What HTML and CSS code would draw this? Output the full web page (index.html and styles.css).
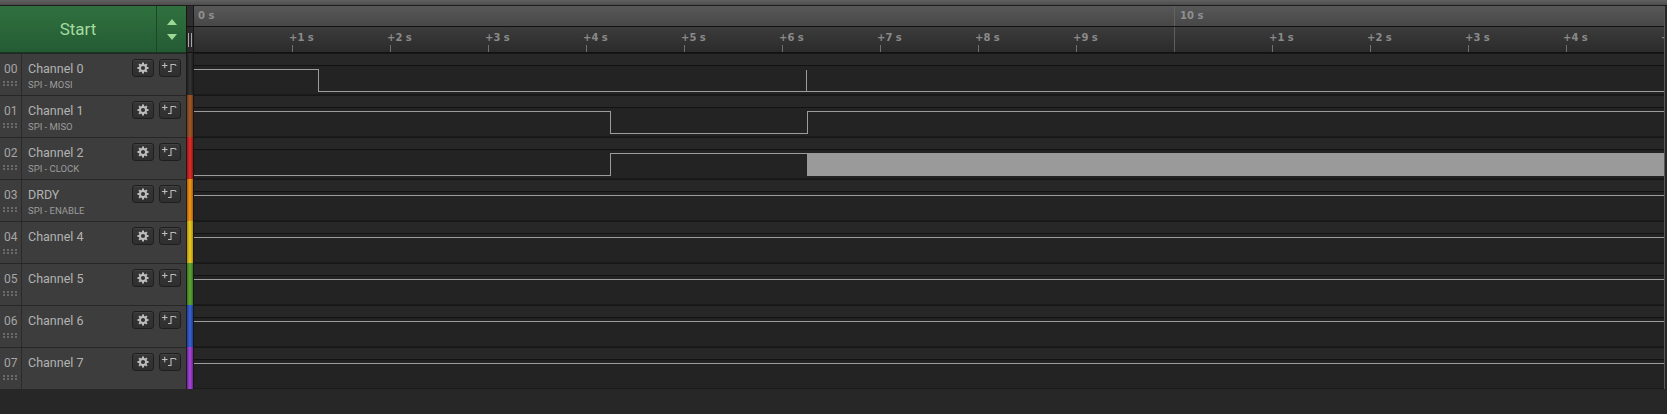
FILE: index.html
```html
<!DOCTYPE html>
<html>
<head>
<meta charset="utf-8">
<link rel="stylesheet" href="styles.css">
</head>
<body>
<div class="app">
  <div class="topband"></div>
  <div class="header">
    <div class="start">
      <div class="start-label">Start</div>
      <div class="arrows"><span class="tri-up"></span><span class="tri-down"></span></div>
    </div>
    <div class="hgutter"><div class="hg1"></div><div class="hg2"><span class="grip2"></span></div></div>
    <div class="ruler">
      <div class="ruler-top"><div class="seg-a">0 s</div><div class="seg-b">10 s</div></div>
      <div class="ruler-ticks">
        <div class="cell"></div>
        <div class="cell"><span class="lbl">+1 s</span><span class="tick"></span></div>
        <div class="cell"><span class="lbl">+2 s</span><span class="tick"></span></div>
        <div class="cell"><span class="lbl">+3 s</span><span class="tick"></span></div>
        <div class="cell"><span class="lbl">+4 s</span><span class="tick"></span></div>
        <div class="cell"><span class="lbl">+5 s</span><span class="tick"></span></div>
        <div class="cell"><span class="lbl">+6 s</span><span class="tick"></span></div>
        <div class="cell"><span class="lbl">+7 s</span><span class="tick"></span></div>
        <div class="cell"><span class="lbl">+8 s</span><span class="tick"></span></div>
        <div class="cell"><span class="lbl">+9 s</span><span class="tick"></span></div>
        <div class="cell major"></div>
        <div class="cell"><span class="lbl">+1 s</span><span class="tick"></span></div>
        <div class="cell"><span class="lbl">+2 s</span><span class="tick"></span></div>
        <div class="cell"><span class="lbl">+3 s</span><span class="tick"></span></div>
        <div class="cell"><span class="lbl">+4 s</span><span class="tick"></span></div>
        <div class="cell"><span class="lbl">+5 s</span><span class="tick"></span></div>
      </div>
    </div>
    <div class="edge"></div>
  </div>

  <div class="channel">
    <div class="label">
      <div class="num"><span class="idx">00</span><svg class="grip" width="16" height="5" viewBox="0 0 16 5"><g fill="#6a6a6a"><rect x="0" y="0" width="2" height="2"/><rect x="4" y="0" width="2" height="2"/><rect x="8" y="0" width="2" height="2"/><rect x="12" y="0" width="2" height="2"/><rect x="0" y="3" width="2" height="2"/><rect x="4" y="3" width="2" height="2"/><rect x="8" y="3" width="2" height="2"/><rect x="12" y="3" width="2" height="2"/></g></svg></div>
      <div class="info">
        <div class="name-row"><span class="name">Channel 0</span>
          <span class="btn"><svg width="12" height="12" viewBox="0 0 12 12"><g fill="#bdbdbd"><circle cx="6" cy="6" r="4"/><rect x="5" y="0.5" width="2" height="11"/><rect x="5" y="0.5" width="2" height="11" transform="rotate(45 6 6)"/><rect x="5" y="0.5" width="2" height="11" transform="rotate(90 6 6)"/><rect x="5" y="0.5" width="2" height="11" transform="rotate(135 6 6)"/></g><circle cx="6" cy="6" r="2.1" fill="#333"/></svg></span>
          <span class="btn"><svg width="20" height="16" viewBox="0 0 20 16"><path d="M2 5.5H7.5M4.75 2.75V8.25M8 11.5H11V4.5H14.5Q16 4.5 16 6" fill="none" stroke="#bdbdbd" stroke-width="1.1"/></svg></span>
        </div>
        <div class="sub">SPI - MOSI</div>
      </div>
    </div>
    <div class="gutter c0"></div>
    <div class="track"><div class="strip"></div><div class="signal"><svg width="1470" height="28" viewBox="0 0 1470 28" shape-rendering="crispEdges"><path d="M0 3.5H124.5V25.5H1470M612.5 3.5V25.5" fill="none" stroke="#9c9c9c" stroke-width="1"/></svg></div></div>
    <div class="edge"></div>
  </div>

  <div class="channel">
    <div class="label">
      <div class="num"><span class="idx">01</span><svg class="grip" width="16" height="5" viewBox="0 0 16 5"><g fill="#6a6a6a"><rect x="0" y="0" width="2" height="2"/><rect x="4" y="0" width="2" height="2"/><rect x="8" y="0" width="2" height="2"/><rect x="12" y="0" width="2" height="2"/><rect x="0" y="3" width="2" height="2"/><rect x="4" y="3" width="2" height="2"/><rect x="8" y="3" width="2" height="2"/><rect x="12" y="3" width="2" height="2"/></g></svg></div>
      <div class="info">
        <div class="name-row"><span class="name">Channel 1</span>
          <span class="btn"><svg width="12" height="12" viewBox="0 0 12 12"><g fill="#bdbdbd"><circle cx="6" cy="6" r="4"/><rect x="5" y="0.5" width="2" height="11"/><rect x="5" y="0.5" width="2" height="11" transform="rotate(45 6 6)"/><rect x="5" y="0.5" width="2" height="11" transform="rotate(90 6 6)"/><rect x="5" y="0.5" width="2" height="11" transform="rotate(135 6 6)"/></g><circle cx="6" cy="6" r="2.1" fill="#333"/></svg></span>
          <span class="btn"><svg width="20" height="16" viewBox="0 0 20 16"><path d="M2 5.5H7.5M4.75 2.75V8.25M8 11.5H11V4.5H14.5Q16 4.5 16 6" fill="none" stroke="#bdbdbd" stroke-width="1.1"/></svg></span>
        </div>
        <div class="sub">SPI - MISO</div>
      </div>
    </div>
    <div class="gutter c1"></div>
    <div class="track"><div class="strip"></div><div class="signal"><svg width="1470" height="28" viewBox="0 0 1470 28" shape-rendering="crispEdges"><path d="M0 3.5H416.5V25.5H613.5V3.5H1470" fill="none" stroke="#9c9c9c" stroke-width="1"/></svg></div></div>
    <div class="edge"></div>
  </div>

  <div class="channel">
    <div class="label">
      <div class="num"><span class="idx">02</span><svg class="grip" width="16" height="5" viewBox="0 0 16 5"><g fill="#6a6a6a"><rect x="0" y="0" width="2" height="2"/><rect x="4" y="0" width="2" height="2"/><rect x="8" y="0" width="2" height="2"/><rect x="12" y="0" width="2" height="2"/><rect x="0" y="3" width="2" height="2"/><rect x="4" y="3" width="2" height="2"/><rect x="8" y="3" width="2" height="2"/><rect x="12" y="3" width="2" height="2"/></g></svg></div>
      <div class="info">
        <div class="name-row"><span class="name">Channel 2</span>
          <span class="btn"><svg width="12" height="12" viewBox="0 0 12 12"><g fill="#bdbdbd"><circle cx="6" cy="6" r="4"/><rect x="5" y="0.5" width="2" height="11"/><rect x="5" y="0.5" width="2" height="11" transform="rotate(45 6 6)"/><rect x="5" y="0.5" width="2" height="11" transform="rotate(90 6 6)"/><rect x="5" y="0.5" width="2" height="11" transform="rotate(135 6 6)"/></g><circle cx="6" cy="6" r="2.1" fill="#333"/></svg></span>
          <span class="btn"><svg width="20" height="16" viewBox="0 0 20 16"><path d="M2 5.5H7.5M4.75 2.75V8.25M8 11.5H11V4.5H14.5Q16 4.5 16 6" fill="none" stroke="#bdbdbd" stroke-width="1.1"/></svg></span>
        </div>
        <div class="sub">SPI - CLOCK</div>
      </div>
    </div>
    <div class="gutter c2"></div>
    <div class="track"><div class="strip"></div><div class="signal"><svg width="1470" height="28" viewBox="0 0 1470 28" shape-rendering="crispEdges"><rect x="613" y="3" width="857" height="23" fill="#9a9a9a"/><path d="M0 25.5H416.5V3.5H613.5" fill="none" stroke="#9c9c9c" stroke-width="1"/></svg></div></div>
    <div class="edge"></div>
  </div>

  <div class="channel">
    <div class="label">
      <div class="num"><span class="idx">03</span><svg class="grip" width="16" height="5" viewBox="0 0 16 5"><g fill="#6a6a6a"><rect x="0" y="0" width="2" height="2"/><rect x="4" y="0" width="2" height="2"/><rect x="8" y="0" width="2" height="2"/><rect x="12" y="0" width="2" height="2"/><rect x="0" y="3" width="2" height="2"/><rect x="4" y="3" width="2" height="2"/><rect x="8" y="3" width="2" height="2"/><rect x="12" y="3" width="2" height="2"/></g></svg></div>
      <div class="info">
        <div class="name-row"><span class="name">DRDY</span>
          <span class="btn"><svg width="12" height="12" viewBox="0 0 12 12"><g fill="#bdbdbd"><circle cx="6" cy="6" r="4"/><rect x="5" y="0.5" width="2" height="11"/><rect x="5" y="0.5" width="2" height="11" transform="rotate(45 6 6)"/><rect x="5" y="0.5" width="2" height="11" transform="rotate(90 6 6)"/><rect x="5" y="0.5" width="2" height="11" transform="rotate(135 6 6)"/></g><circle cx="6" cy="6" r="2.1" fill="#333"/></svg></span>
          <span class="btn"><svg width="20" height="16" viewBox="0 0 20 16"><path d="M2 5.5H7.5M4.75 2.75V8.25M8 11.5H11V4.5H14.5Q16 4.5 16 6" fill="none" stroke="#bdbdbd" stroke-width="1.1"/></svg></span>
        </div>
        <div class="sub">SPI - ENABLE</div>
      </div>
    </div>
    <div class="gutter c3"></div>
    <div class="track"><div class="strip"></div><div class="signal"><svg width="1470" height="28" viewBox="0 0 1470 28" shape-rendering="crispEdges"><path d="M0 3.5H1470" fill="none" stroke="#9c9c9c" stroke-width="1"/></svg></div></div>
    <div class="edge"></div>
  </div>

  <div class="channel">
    <div class="label">
      <div class="num"><span class="idx">04</span><svg class="grip" width="16" height="5" viewBox="0 0 16 5"><g fill="#6a6a6a"><rect x="0" y="0" width="2" height="2"/><rect x="4" y="0" width="2" height="2"/><rect x="8" y="0" width="2" height="2"/><rect x="12" y="0" width="2" height="2"/><rect x="0" y="3" width="2" height="2"/><rect x="4" y="3" width="2" height="2"/><rect x="8" y="3" width="2" height="2"/><rect x="12" y="3" width="2" height="2"/></g></svg></div>
      <div class="info">
        <div class="name-row"><span class="name">Channel 4</span>
          <span class="btn"><svg width="12" height="12" viewBox="0 0 12 12"><g fill="#bdbdbd"><circle cx="6" cy="6" r="4"/><rect x="5" y="0.5" width="2" height="11"/><rect x="5" y="0.5" width="2" height="11" transform="rotate(45 6 6)"/><rect x="5" y="0.5" width="2" height="11" transform="rotate(90 6 6)"/><rect x="5" y="0.5" width="2" height="11" transform="rotate(135 6 6)"/></g><circle cx="6" cy="6" r="2.1" fill="#333"/></svg></span>
          <span class="btn"><svg width="20" height="16" viewBox="0 0 20 16"><path d="M2 5.5H7.5M4.75 2.75V8.25M8 11.5H11V4.5H14.5Q16 4.5 16 6" fill="none" stroke="#bdbdbd" stroke-width="1.1"/></svg></span>
        </div>
        <div class="sub"></div>
      </div>
    </div>
    <div class="gutter c4"></div>
    <div class="track"><div class="strip"></div><div class="signal"><svg width="1470" height="28" viewBox="0 0 1470 28" shape-rendering="crispEdges"><path d="M0 3.5H1470" fill="none" stroke="#9c9c9c" stroke-width="1"/></svg></div></div>
    <div class="edge"></div>
  </div>

  <div class="channel">
    <div class="label">
      <div class="num"><span class="idx">05</span><svg class="grip" width="16" height="5" viewBox="0 0 16 5"><g fill="#6a6a6a"><rect x="0" y="0" width="2" height="2"/><rect x="4" y="0" width="2" height="2"/><rect x="8" y="0" width="2" height="2"/><rect x="12" y="0" width="2" height="2"/><rect x="0" y="3" width="2" height="2"/><rect x="4" y="3" width="2" height="2"/><rect x="8" y="3" width="2" height="2"/><rect x="12" y="3" width="2" height="2"/></g></svg></div>
      <div class="info">
        <div class="name-row"><span class="name">Channel 5</span>
          <span class="btn"><svg width="12" height="12" viewBox="0 0 12 12"><g fill="#bdbdbd"><circle cx="6" cy="6" r="4"/><rect x="5" y="0.5" width="2" height="11"/><rect x="5" y="0.5" width="2" height="11" transform="rotate(45 6 6)"/><rect x="5" y="0.5" width="2" height="11" transform="rotate(90 6 6)"/><rect x="5" y="0.5" width="2" height="11" transform="rotate(135 6 6)"/></g><circle cx="6" cy="6" r="2.1" fill="#333"/></svg></span>
          <span class="btn"><svg width="20" height="16" viewBox="0 0 20 16"><path d="M2 5.5H7.5M4.75 2.75V8.25M8 11.5H11V4.5H14.5Q16 4.5 16 6" fill="none" stroke="#bdbdbd" stroke-width="1.1"/></svg></span>
        </div>
        <div class="sub"></div>
      </div>
    </div>
    <div class="gutter c5"></div>
    <div class="track"><div class="strip"></div><div class="signal"><svg width="1470" height="28" viewBox="0 0 1470 28" shape-rendering="crispEdges"><path d="M0 3.5H1470" fill="none" stroke="#9c9c9c" stroke-width="1"/></svg></div></div>
    <div class="edge"></div>
  </div>

  <div class="channel">
    <div class="label">
      <div class="num"><span class="idx">06</span><svg class="grip" width="16" height="5" viewBox="0 0 16 5"><g fill="#6a6a6a"><rect x="0" y="0" width="2" height="2"/><rect x="4" y="0" width="2" height="2"/><rect x="8" y="0" width="2" height="2"/><rect x="12" y="0" width="2" height="2"/><rect x="0" y="3" width="2" height="2"/><rect x="4" y="3" width="2" height="2"/><rect x="8" y="3" width="2" height="2"/><rect x="12" y="3" width="2" height="2"/></g></svg></div>
      <div class="info">
        <div class="name-row"><span class="name">Channel 6</span>
          <span class="btn"><svg width="12" height="12" viewBox="0 0 12 12"><g fill="#bdbdbd"><circle cx="6" cy="6" r="4"/><rect x="5" y="0.5" width="2" height="11"/><rect x="5" y="0.5" width="2" height="11" transform="rotate(45 6 6)"/><rect x="5" y="0.5" width="2" height="11" transform="rotate(90 6 6)"/><rect x="5" y="0.5" width="2" height="11" transform="rotate(135 6 6)"/></g><circle cx="6" cy="6" r="2.1" fill="#333"/></svg></span>
          <span class="btn"><svg width="20" height="16" viewBox="0 0 20 16"><path d="M2 5.5H7.5M4.75 2.75V8.25M8 11.5H11V4.5H14.5Q16 4.5 16 6" fill="none" stroke="#bdbdbd" stroke-width="1.1"/></svg></span>
        </div>
        <div class="sub"></div>
      </div>
    </div>
    <div class="gutter c6"></div>
    <div class="track"><div class="strip"></div><div class="signal"><svg width="1470" height="28" viewBox="0 0 1470 28" shape-rendering="crispEdges"><path d="M0 3.5H1470" fill="none" stroke="#9c9c9c" stroke-width="1"/></svg></div></div>
    <div class="edge"></div>
  </div>

  <div class="channel">
    <div class="label">
      <div class="num"><span class="idx">07</span><svg class="grip" width="16" height="5" viewBox="0 0 16 5"><g fill="#6a6a6a"><rect x="0" y="0" width="2" height="2"/><rect x="4" y="0" width="2" height="2"/><rect x="8" y="0" width="2" height="2"/><rect x="12" y="0" width="2" height="2"/><rect x="0" y="3" width="2" height="2"/><rect x="4" y="3" width="2" height="2"/><rect x="8" y="3" width="2" height="2"/><rect x="12" y="3" width="2" height="2"/></g></svg></div>
      <div class="info">
        <div class="name-row"><span class="name">Channel 7</span>
          <span class="btn"><svg width="12" height="12" viewBox="0 0 12 12"><g fill="#bdbdbd"><circle cx="6" cy="6" r="4"/><rect x="5" y="0.5" width="2" height="11"/><rect x="5" y="0.5" width="2" height="11" transform="rotate(45 6 6)"/><rect x="5" y="0.5" width="2" height="11" transform="rotate(90 6 6)"/><rect x="5" y="0.5" width="2" height="11" transform="rotate(135 6 6)"/></g><circle cx="6" cy="6" r="2.1" fill="#333"/></svg></span>
          <span class="btn"><svg width="20" height="16" viewBox="0 0 20 16"><path d="M2 5.5H7.5M4.75 2.75V8.25M8 11.5H11V4.5H14.5Q16 4.5 16 6" fill="none" stroke="#bdbdbd" stroke-width="1.1"/></svg></span>
        </div>
        <div class="sub"></div>
      </div>
    </div>
    <div class="gutter c7"></div>
    <div class="track"><div class="strip"></div><div class="signal"><svg width="1470" height="28" viewBox="0 0 1470 28" shape-rendering="crispEdges"><path d="M0 3.5H1470" fill="none" stroke="#9c9c9c" stroke-width="1"/></svg></div></div>
    <div class="edge"></div>
  </div>
  <div class="footer"></div>
</div>
</body>
</html>
```

FILE: styles.css
```css
* { box-sizing: border-box; }
html, body { margin: 0; padding: 0; }
body {
  width: 1667px;
  height: 414px;
  overflow: hidden;
  background: #272727;
  font-family: Roboto, "Liberation Sans", sans-serif;
}
svg { display: block; }

.topband {
  height: 6px;
  background: linear-gradient(#606060, #4c4c4c);
  border-bottom: 1px solid #1c1c1c;
}

.header { display: flex; height: 47px; }

.start {
  width: 186px;
  display: flex;
  background: linear-gradient(#30713f, #245b33);
  border-bottom: 1px solid #163820;
}
.start-label {
  width: 157px;
  display: flex;
  align-items: center;
  justify-content: center;
  color: #a6dba0;
  font-size: 17px;
  border-right: 1px solid #1d4527;
}
.arrows {
  flex: 1;
  display: flex;
  flex-direction: column;
  align-items: center;
  justify-content: center;
  gap: 9px;
}
.tri-up {
  width: 0; height: 0;
  border-left: 5px solid transparent;
  border-right: 5px solid transparent;
  border-bottom: 6px solid #9bd795;
}
.tri-down {
  width: 0; height: 0;
  border-left: 5px solid transparent;
  border-right: 5px solid transparent;
  border-top: 6px solid #9bd795;
}

.hgutter {
  width: 8px;
  display: flex;
  flex-direction: column;
  border-left: 1px solid #161616;
  border-right: 1px solid #161616;
}
.hg1 { height: 21px; background: #2f2f2f; border-bottom: 1px solid #111; }
.hg2 {
  flex: 1;
  background: #2a2a2a;
  border-bottom: 1px solid #111;
  display: flex;
  align-items: center;
  justify-content: center;
}
.grip2 {
  width: 4px;
  height: 14px;
  border-left: 1px solid #a8a8a8;
  border-right: 1px solid #a8a8a8;
}

.ruler {
  width: 1470px;
  display: flex;
  flex-direction: column;
  overflow: hidden;
}
.ruler-top {
  height: 21px;
  display: flex;
  background: linear-gradient(#585858, #474747);
  border-bottom: 1px solid #121212;
  font: bold 10px/20px "DejaVu Sans", sans-serif;
  color: #8f8f8f;
}
.seg-a { width: 980px; padding-left: 4px; }
.seg-b { flex: 1; border-left: 1px solid #626262; padding-left: 5px; }

.ruler-ticks {
  height: 26px;
  display: flex;
  background: linear-gradient(#3c3c3c, #2b2b2b);
  border-bottom: 1px solid #121212;
}
.cell {
  flex: 0 0 98px;
  display: flex;
  flex-direction: column;
  justify-content: space-between;
  align-items: flex-start;
}
.cell.major { border-left: 1px solid #5e5e5e; }
.lbl {
  margin-left: -3px;
  margin-top: 5px;
  font: bold 10px/12px "DejaVu Sans", sans-serif;
  color: #8a8a8a;
  white-space: nowrap;
}
.tick { width: 1px; height: 7px; background: #707070; }

.edge {
  width: 3px;
  border-left: 1px solid #585858;
  background: #262626;
}

.channel { display: flex; height: 42px; }
.label {
  width: 186px;
  display: flex;
  background: #3d3d3d;
  border-top: 1px solid #272727;
}
.num {
  width: 22px;
  border-right: 1px solid #2b2b2b;
  display: flex;
  flex-direction: column;
  align-items: flex-start;
  padding: 6px 0 0 4px;
}
.idx { font-size: 12px; line-height: 18px; color: #a6a6a6; }
.grip { margin-top: 3px; margin-left: -1px; }

.info { flex: 1; padding: 5px 5px 0 6px; }
.name-row { display: flex; align-items: center; height: 18px; }
.name { flex: 1; font-size: 12.5px; color: #b3b3b3; }
.btn {
  width: 22px;
  height: 18px;
  margin-left: 5px;
  border: 1px solid #1e1e1e;
  border-radius: 3px;
  background: linear-gradient(#363636, #2f2f2f);
  box-shadow: inset 0 1px 0 rgba(255,255,255,0.06);
  display: flex;
  align-items: center;
  justify-content: center;
}
.sub { font-size: 9.5px; line-height: 12px; margin-top: 2px; color: #9c9c9c; }

.gutter {
  width: 8px;
  border-left: 1px solid #1a1a1a;
  border-right: 1px solid #161616;
}
.c0 { background: linear-gradient(90deg, #1e1e1e, #363636, #1e1e1e); }
.c1 { background: linear-gradient(90deg, #6e3815, #a65a28, #6e3815); }
.c2 { background: linear-gradient(90deg, #9a1414, #e0302a, #9a1414); }
.c3 { background: linear-gradient(90deg, #b06000, #f39a1a, #b06000); }
.c4 { background: linear-gradient(90deg, #b09000, #eccc28, #b09000); }
.c5 { background: linear-gradient(90deg, #3a7418, #62a636, #3a7418); }
.c6 { background: linear-gradient(90deg, #1e3c9a, #3c64d2, #1e3c9a); }
.c7 { background: linear-gradient(90deg, #6e2498, #a848d8, #6e2498); }

.track { width: 1470px; display: flex; flex-direction: column; }
.strip {
  height: 13px;
  background: #272727;
  border-top: 1px solid #171717;
  border-bottom: 1px solid #121212;
}
.signal {
  height: 29px;
  background: #232323;
  border-bottom: 1px solid #1a1a1a;
}

.footer { height: 25px; }
```
